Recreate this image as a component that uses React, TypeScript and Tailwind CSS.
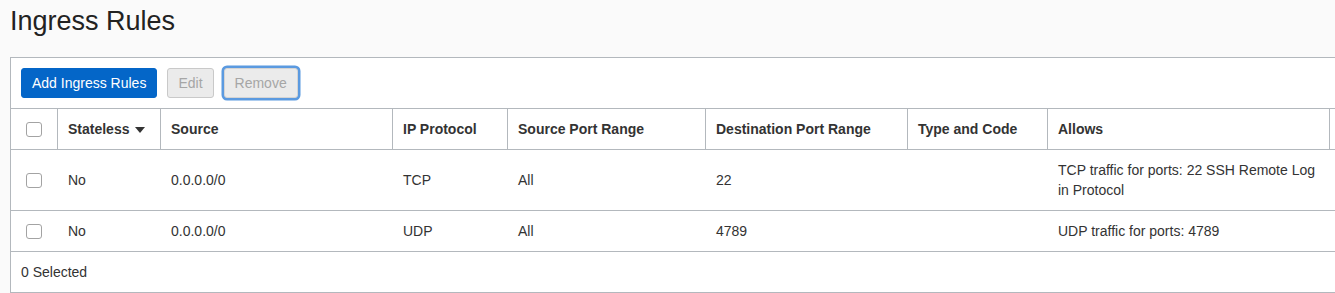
const font = { fontFamily: '"Liberation Sans", Arial, sans-serif' };

const cols =
  "grid grid-cols-[47px_103px_232px_115px_198px_202px_140px_282px_1fr]";

const headers = [
  "Source",
  "IP Protocol",
  "Source Port Range",
  "Destination Port Range",
  "Type and Code",
  "Allows",
];

const rules = [
  {
    stateless: "No",
    source: "0.0.0.0/0",
    protocol: "TCP",
    srcPort: "All",
    dstPort: "22",
    typeCode: "",
    allows: "TCP traffic for ports: 22 SSH Remote Log in Protocol",
  },
  {
    stateless: "No",
    source: "0.0.0.0/0",
    protocol: "UDP",
    srcPort: "All",
    dstPort: "4789",
    typeCode: "",
    allows: "UDP traffic for ports: 4789",
  },
];

function Checkbox() {
  return (
    <span className="block h-[15px] w-[16px] rounded-[3px] border border-[#a3a3a3] bg-white" />
  );
}

export default function App() {
  return (
    <div
      className="h-[293px] w-[1335px] overflow-hidden bg-[#fafafa] text-[14px] text-[#333]"
      style={font}
    >
      <h1 className="pl-[10px] pt-[5px] text-[27px] leading-[32px] text-[#222]">
        Ingress Rules
      </h1>

      <section className="ml-[10px] mt-[20px] border border-r-0 border-[#b3b8bd] bg-white">
        <div className="flex items-center px-[10px] pt-[10px] pb-[10px]">
          <button
            type="button"
            className="h-[30px] rounded-[3px] border border-[#0466c8] bg-[#0466c8] px-[10px] text-white"
          >
            Add Ingress Rules
          </button>
          <button
            type="button"
            className="ml-[10px] h-[30px] rounded-[3px] border border-[#c9c9c9] bg-[#ebebeb] px-[10px] text-[#a6a6a6]"
          >
            Edit
          </button>
          <button
            type="button"
            className="ml-[10px] h-[30px] rounded-[3px] border border-[#d4d4d4] bg-[#ebebeb] px-[10px] text-[#a6a6a6] ring-[2.5px] ring-[#5b9ae0]"
          >
            Remove
          </button>
        </div>

        <div className={`${cols} border-t border-[#b3b8bd] font-bold leading-5`}>
          <div className="flex items-center border-r border-[#b3b8bd] py-[10px] pl-[15px]">
            <Checkbox />
          </div>
          <div className="flex items-center gap-[6px] border-r border-[#b3b8bd] px-[10px] py-[10px]">
            Stateless
            <svg width="10" height="6" viewBox="0 0 10 6" className="mt-[1px]">
              <path d="M0 0h10L5 6z" fill="#333" />
            </svg>
          </div>
          {headers.map((h) => (
            <div key={h} className="border-r border-[#b3b8bd] px-[10px] py-[10px]">
              {h}
            </div>
          ))}
          <div />
        </div>

        {rules.map((r, i) => (
          <div key={i} className={`${cols} border-t border-[#b3b8bd] leading-5`}>
            <div className="flex items-center py-[10px] pl-[15px]">
              <Checkbox />
            </div>
            <div className="flex items-center px-[10px] py-[10px]">{r.stateless}</div>
            <div className="flex items-center px-[10px] py-[10px]">{r.source}</div>
            <div className="flex items-center px-[10px] py-[10px]">{r.protocol}</div>
            <div className="flex items-center px-[10px] py-[10px]">{r.srcPort}</div>
            <div className="flex items-center px-[10px] py-[10px]">{r.dstPort}</div>
            <div className="flex items-center px-[10px] py-[10px]">{r.typeCode}</div>
            <div className="flex items-center px-[10px] py-[10px]">{r.allows}</div>
            <div />
          </div>
        ))}

        <div className="border-t border-[#b3b8bd] px-[10px] py-[10px] leading-5">
          0 Selected
        </div>
      </section>
    </div>
  );
}
